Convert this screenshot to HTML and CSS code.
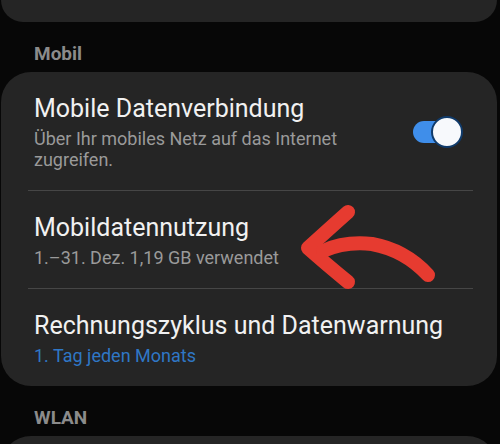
FILE: index.html
```html
<!DOCTYPE html>
<html lang="de">
<head>
<meta charset="utf-8">
<link rel="stylesheet" href="styles.css">
</head>
<body>
<div class="page">
  <div class="card-stub"></div>
  <div class="section-title">Mobil</div>
  <div class="card">
    <div class="row">
      <div class="row-text">
        <div class="title">Mobile Datenverbindung</div>
        <div class="sub">Über Ihr mobiles Netz auf das Internet zugreifen.</div>
      </div>
      <div class="toggle"><div class="knob"></div></div>
    </div>
    <div class="divider"></div>
    <div class="row">
      <div class="row-text">
        <div class="title">Mobildatennutzung</div>
        <div class="sub">1.–31. Dez. 1,19 GB verwendet</div>
      </div>
    </div>
    <div class="divider"></div>
    <div class="row">
      <div class="row-text">
        <div class="title">Rechnungszyklus und Datenwarnung</div>
        <div class="sub blue">1. Tag jeden Monats</div>
      </div>
    </div>
  </div>
  <div class="section-title">WLAN</div>
  <div class="card card-next"></div>
  <svg class="arrow" width="500" height="444" viewBox="0 0 500 444">
    <g fill="none" stroke="#e63b30" stroke-width="14" stroke-linecap="round" stroke-linejoin="round">
      <path d="M348 212 Q330 228 308 248 Q326 264 348 282"/>
      <path d="M323 251 Q345 241 372 244 Q405 250 428 275"/>
    </g>
  </svg>
</div>
</body>
</html>
```
FILE: styles.css
```css
html, body {
  margin: 0;
  padding: 0;
  background: #070707;
}
body {
  width: 500px;
  height: 444px;
  overflow: hidden;
  font-family: Roboto, "Noto Sans", sans-serif;
}
.page {
  position: relative;
  width: 500px;
  height: 444px;
  padding: 0 3px 0 1px;
  box-sizing: border-box;
}
.card-stub {
  height: 22px;
  background: #252525;
  border-radius: 0 0 30px 30px;
}
.section-title {
  padding: 21px 0 7px 33px;
  font-size: 19px;
  line-height: 22px;
  font-weight: 700;
  color: #8b8b8b;
}
.card {
  background: #252525;
  border-radius: 30px;
}
.row {
  display: flex;
  align-items: center;
  padding: 22px 34px 20px 33px;
}
.row-text {
  flex: 1;
  display: flex;
  flex-direction: column;
  gap: 4px;
}
.title {
  font-size: 25px;
  line-height: 30px;
  color: #f1f1f1;
}
.sub {
  font-size: 18px;
  line-height: 21px;
  color: #9a9a9a;
  max-width: 360px;
}
.sub.blue {
  color: #2f77c6;
}
.divider {
  height: 1px;
  margin: 0 24px 0 27px;
  background: #464646;
}
.toggle {
  position: relative;
  width: 42px;
  height: 22px;
  margin-left: 12px;
  margin-right: 8px;
  border-radius: 11px;
  background: #3f8eea;
  flex: none;
}
.knob {
  position: absolute;
  left: 18px;
  top: -5px;
  width: 28px;
  height: 28px;
  border-radius: 50%;
  background: #f7f9fc;
  border: 2px solid #103b6b;
}
.card-next {
  height: 30px;
  border-radius: 30px 30px 0 0;
}
.arrow {
  position: absolute;
  left: 0;
  top: 0;
  pointer-events: none;
}
```
